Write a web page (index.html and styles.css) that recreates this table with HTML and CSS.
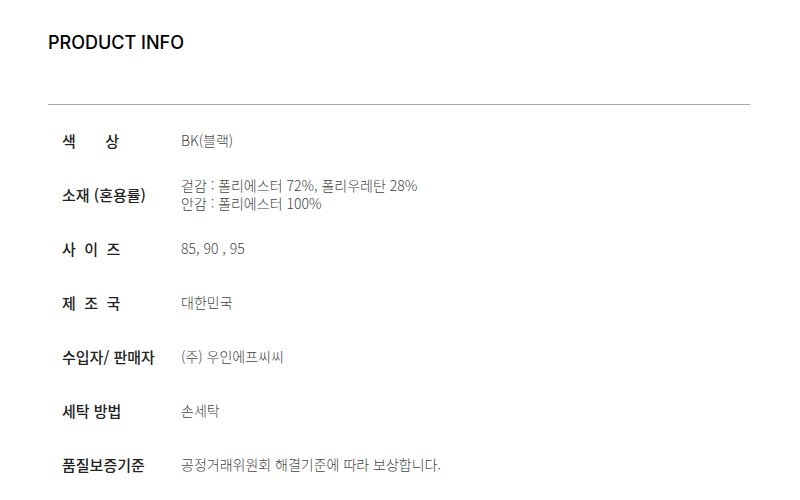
FILE: index.html
```html
<!DOCTYPE html>
<html lang="ko">
<head>
  <meta charset="UTF-8" />
  <meta name="viewport" content="width=device-width, initial-scale=1.0"/>
  <title>Product Info</title>
  <link rel="stylesheet" href="styles.css">
</head>
<body>
  <div class="info">
    <h2 class="info-title">PRODUCT INFO</h2>
    <div class="info-table">
      <div class="row">
        <div class="label">색&nbsp;&nbsp;&nbsp;&nbsp;&nbsp;&nbsp;&nbsp;상</div>
        <div class="value">BK(블랙)</div>
      </div>
      <div class="row">
        <div class="label">소재 (혼용률)</div>
        <div class="value">겉감 : 폴리에스터 72%, 폴리우레탄 28%<br>안감 : 폴리에스터 100%</div>
      </div>
      <div class="row">
        <div class="label">사&nbsp;&nbsp;이&nbsp;&nbsp;즈</div>
        <div class="value">85, 90 , 95</div>
      </div>
      <div class="row">
        <div class="label">제&nbsp;&nbsp;조&nbsp;&nbsp;국</div>
        <div class="value">대한민국</div>
      </div>
      <div class="row">
        <div class="label">수입자/ 판매자</div>
        <div class="value">(주) 우인에프씨씨</div>
      </div>
      <div class="row">
        <div class="label">세탁 방법</div>
        <div class="value">손세탁</div>
      </div>
      <div class="row">
        <div class="label">품질보증기준</div>
        <div class="value">공정거래위원회 해결기준에 따라 보상합니다.</div>
      </div>
    </div>
  </div>
</body>
</html>
```

FILE: styles.css
```css
body {
  margin: 0;
  background: #fff;
  font-family: "Noto Sans CJK KR", "Noto Sans", sans-serif;
  color: #222;
}

.info {
  width: 702px;
  padding: 0 50px 0 48px;
}

.info-title {
  font-family: Inter, "Noto Sans CJK KR", sans-serif;
  font-size: 18px;
  font-weight: 500;
  color: #000;
  margin: 0;
  padding: 32px 0 0;
  line-height: 22px;
  height: 72px;
  border-bottom: 1px solid #aaa;
}

.info-table {
  padding-top: 8px;
}

.row {
  display: flex;
  align-items: center;
  height: 54px;
  padding-left: 14px;
}

.label {
  width: 119px;
  font-size: 15px;
  font-weight: 500;
  color: #222;
}

.value {
  font-size: 14px;
  font-weight: 300;
  line-height: 18px;
  color: #444;
}
```
